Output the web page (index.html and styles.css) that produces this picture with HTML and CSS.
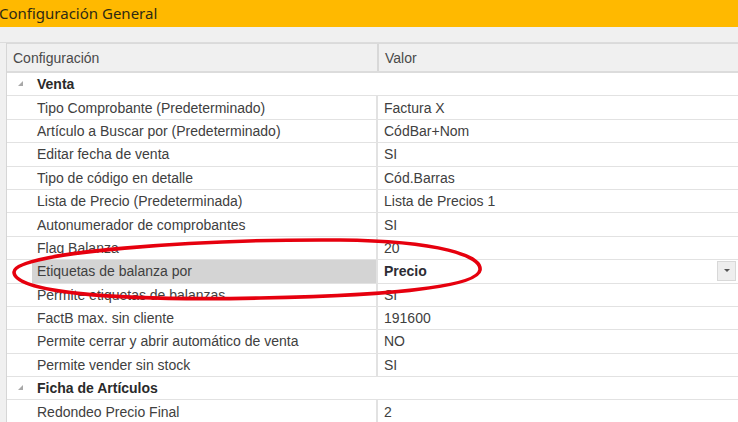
FILE: index.html
```html
<!DOCTYPE html>
<html>
<head>
<meta charset="utf-8">
<link rel="stylesheet" href="styles.css">
</head>
<body>
<div class="page">
  <div class="title">Configuración General</div>
  <div class="band"></div>
  <div class="grid">
    <div class="head">
      <div class="hcell hname">Configuración</div>
      <div class="hcell hval">Valor</div>
    </div>
    <div class="row group"><div class="gut"><span class="tri"></span></div><div class="gname">Venta</div></div>
    <div class="row"><div class="gut"></div><div class="name">Tipo Comprobante (Predeterminado)</div><div class="val">Factura X</div></div>
    <div class="row"><div class="gut"></div><div class="name">Artículo a Buscar por (Predeterminado)</div><div class="val">CódBar+Nom</div></div>
    <div class="row"><div class="gut"></div><div class="name">Editar fecha de venta</div><div class="val">SI</div></div>
    <div class="row"><div class="gut"></div><div class="name">Tipo de código en detalle</div><div class="val">Cód.Barras</div></div>
    <div class="row"><div class="gut"></div><div class="name">Lista de Precio (Predeterminada)</div><div class="val">Lista de Precios 1</div></div>
    <div class="row"><div class="gut"></div><div class="name">Autonumerador de comprobantes</div><div class="val">SI</div></div>
    <div class="row"><div class="gut"></div><div class="name">Flag Balanza</div><div class="val">20</div></div>
    <div class="row sel"><div class="gut"></div><div class="name">Etiquetas de balanza por</div><div class="val bold">Precio<span class="drop"><span class="arrow"></span></span></div></div>
    <div class="row"><div class="gut"></div><div class="name">Permite etiquetas de balanzas</div><div class="val">SI</div></div>
    <div class="row"><div class="gut"></div><div class="name">FactB max. sin cliente</div><div class="val">191600</div></div>
    <div class="row"><div class="gut"></div><div class="name">Permite cerrar y abrir automático de venta</div><div class="val">NO</div></div>
    <div class="row"><div class="gut"></div><div class="name">Permite vender sin stock</div><div class="val">SI</div></div>
    <div class="row group"><div class="gut"><span class="tri"></span></div><div class="gname">Ficha de Artículos</div></div>
    <div class="row"><div class="gut"></div><div class="name">Redondeo Precio Final</div><div class="val">2</div></div>
  </div>
  <svg class="mark" width="738" height="422" viewBox="0 0 738 422">
    <path d="M 14 272 C 14 252, 200 239, 340 240 C 440 241, 482 256, 480 270 C 478 284, 420 295, 260 298 C 110 301, 14 292, 14 272 Z" fill="none" stroke="#e6000e" stroke-width="3.6"/>
  </svg>
</div>
</body>
</html>
```
FILE: styles.css
```css
html, body {
  margin: 0;
  padding: 0;
}
body {
  width: 738px;
  height: 422px;
  overflow: hidden;
  background: #f0f0f0;
  font-family: "Liberation Sans", Arial, sans-serif;
  font-size: 14px;
  color: #404040;
}
.page {
  position: relative;
  width: 738px;
  height: 422px;
  overflow: hidden;
}
.title {
  height: 27px;
  background: #ffb900;
  font-family: "Noto Sans", "Open Sans", sans-serif;
  font-size: 15px;
  line-height: 27px;
  color: #2e2a14;
  margin-left: -1px;
}
.band {
  height: 15px;
  background: #f0f0f0;
  border-bottom: 1px solid #dcdcdc;
}
.grid {
  margin-left: 6px;
  border-left: 1px solid #d6d6d6;
  background: #ffffff;
}
.head {
  display: flex;
  background: #f0f0f0;
  border-top: 1px solid #dadada;
  border-bottom: 2px solid #dcdcdc;
  box-sizing: border-box;
  height: 30px;
}
.hcell {
  display: flex;
  align-items: center;
  color: #4a4a4a;
}
.hname {
  width: 364px;
  padding-left: 6px;
  border-right: 2px solid #d8d8d8;
}
.hval {
  flex: 1;
  padding-left: 6px;
}
.row {
  display: flex;
  height: 23.4px;
  box-sizing: border-box;
  border-bottom: 1px solid #e2e2e2;
  align-items: stretch;
}
.gut {
  width: 25px;
  flex: none;
  position: relative;
}
.tri {
  position: absolute;
  left: 11px;
  top: 8px;
  width: 0;
  height: 0;
  border-left: 5px solid transparent;
  border-bottom: 5px solid #a8a8a8;
}
.name {
  width: 339px;
  flex: none;
  padding-left: 5px;
  display: flex;
  align-items: center;
  white-space: nowrap;
  overflow: hidden;
  border-right: 2px solid #e2e2e2;
}
.gname {
  flex: 1;
  padding-left: 5px;
  display: flex;
  align-items: center;
  font-weight: bold;
  color: #2a2a2a;
}
.val {
  flex: 1;
  padding-left: 6px;
  display: flex;
  align-items: center;
  position: relative;
}
.sel .name {
  background: #d4d4d4;
}
.bold {
  font-weight: bold;
  color: #2c2c34;
}
.drop {
  position: absolute;
  right: 2px;
  top: 1px;
  bottom: 2px;
  width: 17px;
  background: #eeeeee;
  border: 1px solid #d8d8d8;
  display: flex;
  align-items: center;
  justify-content: center;
}
.arrow {
  width: 0;
  height: 0;
  border-left: 3px solid transparent;
  border-right: 3px solid transparent;
  border-top: 3px solid #555;
}
.mark {
  position: absolute;
  left: 0;
  top: 0;
  pointer-events: none;
}
```
